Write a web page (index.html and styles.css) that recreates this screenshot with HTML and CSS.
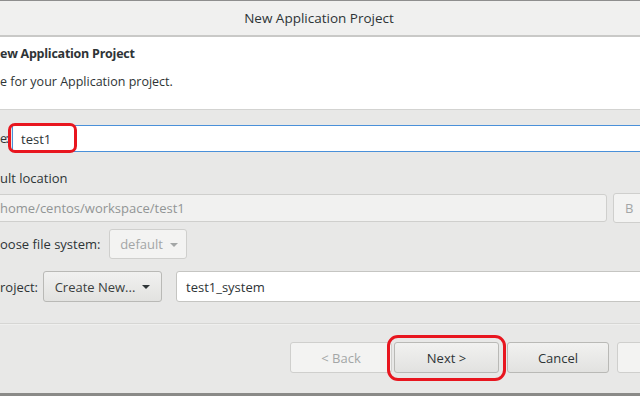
FILE: index.html
```html
<!DOCTYPE html>
<html>
<head>
<meta charset="utf-8">
<link rel="stylesheet" href="styles.css">
</head>
<body>
<div class="window">
  <div class="titlebar">New Application Project</div>
  <div class="header">
    <div class="heading">ew Application Project</div>
    <div class="desc">e for your Application project.</div>
  </div>
  <div class="form">
    <div class="row name-row">
      <span class="label name-label">e:</span>
      <div class="field focused">test1</div>
      <div class="mark mark-name"></div>
    </div>
    <div class="row loc-label">ult location</div>
    <div class="row path-row">
      <div class="field disabled path">home/centos/workspace/test1</div>
      <div class="btn disabled browse">B</div>
    </div>
    <div class="row fs-row">
      <span class="label fs-label">oose file system:</span>
      <div class="btn disabled combo">default <span class="arrow"></span></div>
    </div>
    <div class="row proj-row">
      <span class="label proj-label">roject:</span>
      <div class="btn combo create">Create New... <span class="arrow dark"></span></div>
      <div class="field sys">test1_system</div>
    </div>
  </div>
  <div class="sep"></div>
  <div class="row buttons">
    <div class="btn disabled back">&lt; Back</div>
    <div class="btn next">Next &gt;<div class="mark mark-next"></div></div>
    <div class="btn cancel">Cancel</div>
    <div class="btn finish"></div>
  </div>
  <div class="bottom"></div>
</div>
</body>
</html>
```
FILE: styles.css
```css
html, body {
  margin: 0;
  padding: 0;
}
body {
  width: 640px;
  height: 396px;
  overflow: hidden;
  background: #e8e8e7;
  font-family: "Open Sans", "DejaVu Sans", sans-serif;
  font-size: 13px;
  color: #2e3436;
}
.window {
  width: 640px;
  height: 396px;
  display: flex;
  flex-direction: column;
}
.titlebar {
  height: 34px;
  border-top: 1px solid #8e8e8e;
  border-bottom: 2px solid #c9c9c7;
  background: #f0f0ef;
  display: flex;
  align-items: center;
  justify-content: center;
  box-sizing: content-box;
  font-size: 13.5px;
  color: #2e3436;
  flex: none;
  padding-right: 2px;
}
.header {
  background: #ffffff;
  height: 73px;
  border-bottom: 1px solid #d3d3d1;
  padding-top: 8px;
  box-sizing: border-box;
  flex: none;
}
.heading {
  font-weight: bold;
  font-size: 12.5px;
  letter-spacing: -0.25px;
  line-height: 18px;
}
.desc {
  font-size: 12.5px;
  line-height: 18px;
  margin-top: 10px;
}
.form {
  display: flex;
  flex-direction: column;
}
.row {
  display: flex;
  align-items: center;
  flex: none;
}
.label {
  flex: none;
  white-space: nowrap;
}
.field {
  box-sizing: border-box;
  background: #ffffff;
  border: 1px solid #c5c5c2;
  border-radius: 3px;
  display: flex;
  align-items: center;
  white-space: nowrap;
}
.name-row {
  position: relative;
  margin-top: 15px;
  height: 27px;
}
.name-label {
  width: 12px;
  font-size: 12.5px;
  letter-spacing: -1.5px;
}
.field.focused {
  width: 660px;
  height: 27px;
  border-color: #4a90d9;
  border-radius: 0;
  padding-left: 8px;
  flex: none;
}
.mark {
  position: absolute;
  border: 3px solid #e8161f;
  border-radius: 7px;
  box-sizing: border-box;
  pointer-events: none;
}
.mark-name {
  left: 8px;
  top: -2px;
  width: 69px;
  height: 30px;
}
.loc-label {
  margin-top: 17px;
  height: 17px;
}
.path-row {
  margin-top: 7px;
  height: 30px;
}
.field.disabled {
  background: #f1f1f0;
  color: #919595;
  border-color: #cfcfcd;
}
.path {
  width: 611px;
  height: 28px;
  margin-left: -4px;
  padding-left: 3px;
  flex: none;
}
.btn {
  box-sizing: border-box;
  border: 1px solid #b9b9b6;
  border-radius: 3px;
  background: linear-gradient(#f1f1f0, #e2e2e0);
  display: flex;
  align-items: center;
  justify-content: center;
  white-space: nowrap;
  flex: none;
  color: #2e3436;
}
.btn.disabled {
  background: #f3f3f2;
  border-color: #cfcfcd;
  color: #a3a6a6;
}
.browse {
  margin-left: 6px;
  width: 90px;
  height: 30px;
  justify-content: flex-start;
  padding-left: 11px;
}
.fs-row {
  margin-top: 6px;
  height: 30px;
}
.fs-label {
  width: 109px;
}
.combo {
  height: 30px;
  gap: 7px;
}
.fs-row .combo {
  width: 78px;
  padding-left: 2px;
}
.arrow {
  width: 0;
  height: 0;
  border-left: 4px solid transparent;
  border-right: 4px solid transparent;
  border-top: 4px solid #a3a6a6;
  margin-top: 1px;
}
.arrow.dark {
  border-top-color: #2e3436;
}
.proj-row {
  margin-top: 12px;
  height: 31px;
}
.proj-label {
  width: 43px;
}
.create {
  width: 119px;
  height: 31px;
  color: #3b3f40;
}
.sys {
  margin-left: 14px;
  width: 480px;
  height: 31px;
  padding-left: 9px;
  flex: none;
}
.sep {
  margin-top: 21px;
  height: 1px;
  background: #d6d6d4;
  border-bottom: 1px solid #efefee;
  flex: none;
}
.buttons {
  margin-top: 17px;
  height: 31px;
  padding-left: 290px;
}
.back {
  width: 102px;
}
.back, .next, .cancel, .finish {
  height: 31px;
}
.next {
  width: 105px;
  margin-left: 2px;
  position: relative;
}
.mark-next {
  left: -8px;
  top: -8px;
  width: 119px;
  height: 46px;
  border-radius: 11px;
}
.cancel {
  width: 102px;
  margin-left: 8px;
}
.finish {
  width: 100px;
  margin-left: 8px;
  background: #f3f3f2;
  border-color: #cfcfcd;
}
.bottom {
  margin-top: auto;
  height: 3px;
  background: #8a8a88;
  flex: none;
}
```
